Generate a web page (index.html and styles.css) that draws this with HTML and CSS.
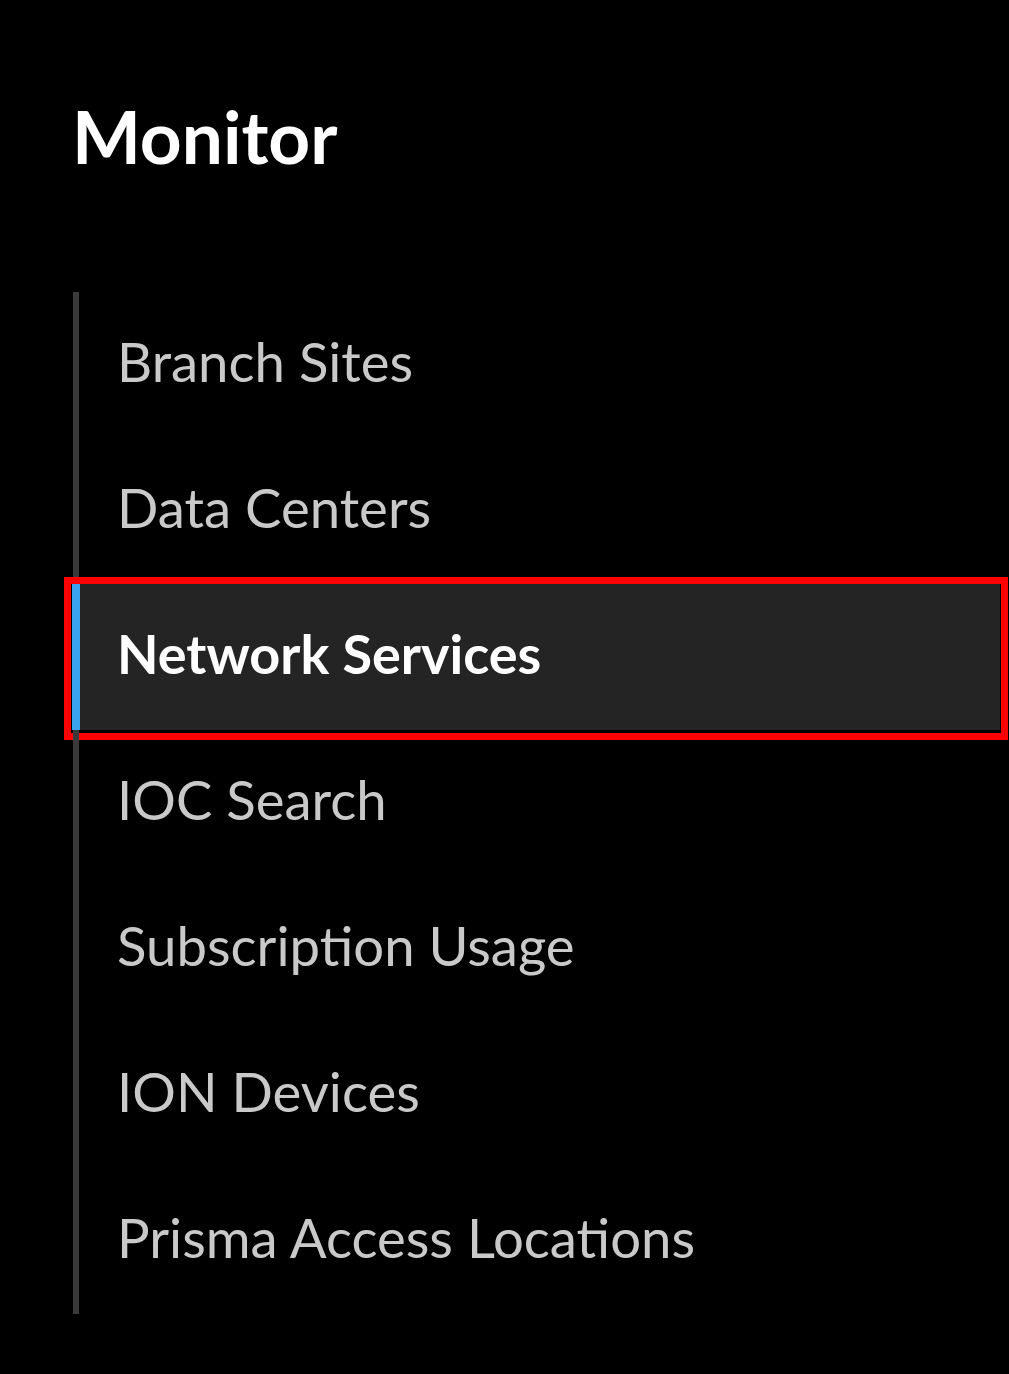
FILE: index.html
```html
<!DOCTYPE html>
<html>
<head>
<meta charset="utf-8">
<link rel="stylesheet" href="styles.css">
</head>
<body>
<div class="panel">
  <h1 class="title">Monitor</h1>
  <ul class="nav">
    <li class="nav-item">Branch Sites</li>
    <li class="nav-item">Data Centers</li>
    <li class="nav-item active">Network Services<span class="highlight"></span></li>
    <li class="nav-item">IOC Search</li>
    <li class="nav-item">Subscription Usage</li>
    <li class="nav-item">ION Devices</li>
    <li class="nav-item">Prisma Access Locations</li>
  </ul>
</div>
</body>
</html>
```

FILE: styles.css
```css
html, body {
  margin: 0;
  padding: 0;
  background: #000;
}
body {
  width: 1009px;
  height: 1374px;
  overflow: hidden;
  font-family: Lato, "Open Sans", sans-serif;
}
.panel {
  padding-left: 73px;
  width: 927px;
}
.title {
  margin: 0 0 0 -1px;
  padding-top: 91px;
  height: 292px;
  box-sizing: border-box;
  color: #fff;
  font-size: 73px;
  font-weight: 700;
  line-height: 90px;
}
.nav {
  list-style: none;
  margin: 0;
  padding: 0;
  display: flex;
  flex-direction: column;
}
.nav-item {
  position: relative;
  height: 146px;
  display: flex;
  align-items: center;
  border-left: 6px solid #3a3a3a;
  padding-left: 38px;
  padding-bottom: 8px;
  color: #c9c9c9;
  font-size: 54.5px;
  box-sizing: border-box;
}
.nav-item.active {
  background: #242424;
  color: #fff;
  font-weight: 700;
  font-size: 54px;
  border-left: 8px solid #3aa3f0;
  margin-left: -1px;
  padding-left: 37px;
}
.highlight {
  position: absolute;
  left: -16px;
  top: -7px;
  width: 944px;
  height: 163px;
  border: 7px solid #ff0000;
  box-sizing: border-box;
}
```
